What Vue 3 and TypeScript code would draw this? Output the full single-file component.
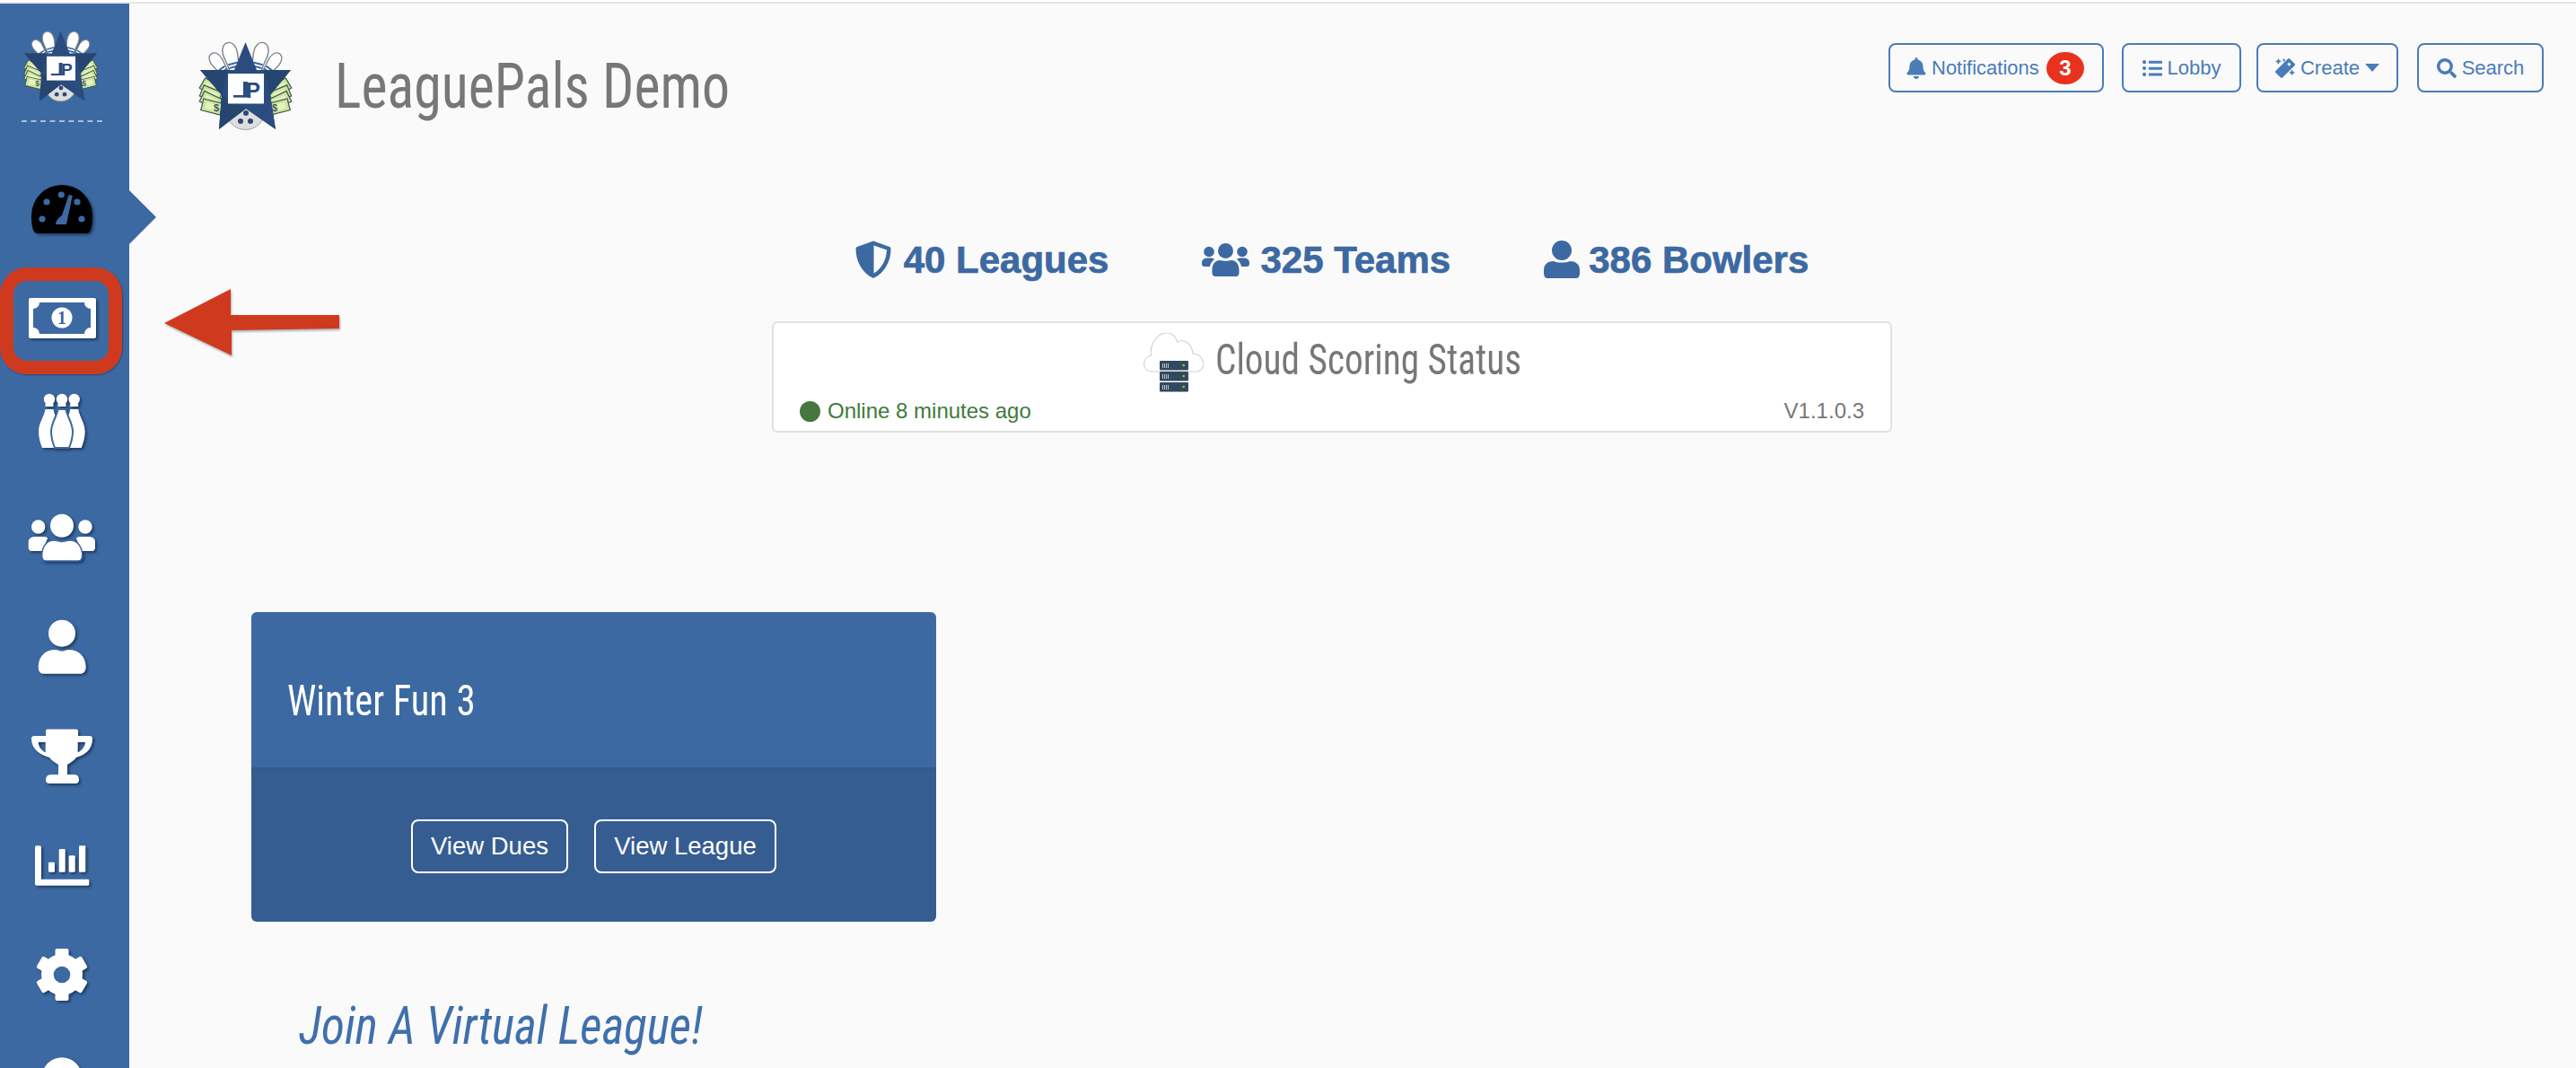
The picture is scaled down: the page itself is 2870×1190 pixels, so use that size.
<script setup lang="ts">
const gearTeeth: number[] = [0, 60, 120, 180, 240, 300]
const pinPath = 'M0,-18 C6,-18 8.5,-11 8,-5 C7.5,1 5.5,6 5.5,17 H-5.5 C-5.5,6 -7.5,1 -8,-5 C-8.5,-11 -6,-18 0,-18 Z'
const bgPin = (c: number): string =>
  `M${c - 4.5},19 H${c + 4.5} C${c + 6},28 ${c + 12},34 ${c + 12},44 C${c + 12},51 ${c + 10},57 ${c + 8},62 H${c - 8} C${c - 10},57 ${c - 12},51 ${c - 12},44 C${c - 12},34 ${c - 6},28 ${c - 4.5},19 Z`
const pins: number[] = [26, 53.7, 40]
const bills: { x: number; y: number; r: number }[] = [
  { x: 21, y: 62, r: 30 },
  { x: 21, y: 69, r: 22 },
  { x: 21, y: 76, r: 26 },
  { x: 22, y: 83, r: 14 },
]
</script>

<template>
  <div class="page">
    <svg class="defs" aria-hidden="true">
      <symbol id="lp-logo" viewBox="0 0 120 120">
        <g v-for="side in [0, 1]" :key="side" :transform="side ? 'translate(119,0) scale(-1,1)' : ''">
          <g transform="translate(30,36) rotate(-35) scale(.82)">
            <path :d="pinPath" fill="#fff" stroke="#7d838a" stroke-width="1.6" />
            <rect x="-5.4" y="5" width="10.8" height="2.4" fill="#3c69a2" />
            <rect x="-5.4" y="9.5" width="10.8" height="2.4" fill="#3c69a2" />
          </g>
          <g transform="translate(44,29)  rotate(-15)">
            <path :d="pinPath" fill="#fff" stroke="#7d838a" stroke-width="1.4" />
            <rect x="-5.4" y="5" width="10.8" height="2.1" fill="#3c69a2" />
            <rect x="-5.4" y="9" width="10.8" height="2.1" fill="#3c69a2" />
          </g>
          <g
            v-for="b in bills"
            :key="b.y"
            :transform="`translate(${b.x},${b.y}) rotate(${b.r})`"
          >
            <rect x="-11" y="-6.5" width="22" height="13" fill="#cfe59c" stroke="#3b5a52" stroke-width="1.2" />
            <rect x="-7" y="-3.5" width="14" height="7" fill="#e6f3bf" />
          </g>
        </g>
        <text class="logo-dollar" x="27" y="88">$</text>
        <text class="logo-dollar" x="92" y="88">$</text>
        <circle cx="59.5" cy="87" r="21.5" fill="#dededc" stroke="#9aa3ad" stroke-width="1" />
        <circle cx="60" cy="90" r="3" fill="#2a4a78" />
        <circle cx="54" cy="99" r="3" fill="#2a4a78" />
        <circle cx="65" cy="99" r="3" fill="#2a4a78" />
        <polygon points="59.5,11 72,42 110,42 87,70 93,108 60,85 30,108 33,70 9,42 47,42" fill="#2b4c7e" />
        <polygon points="9,42 40,42 33,70" fill="#264570" />
        <polygon points="110,42 80,42 87,70" fill="#264570" />
        <polygon points="33,70 60,85 30,108" fill="#264570" />
        <polygon points="87,70 60,85 93,108" fill="#2b4c7e" />
        <rect x="40" y="46" width="40" height="33.5" fill="#fff" />
        <rect x="46" y="70" width="12" height="2.6" fill="#2b4c7e" />
        <rect x="57" y="55" width="5" height="17.6" fill="#2b4c7e" />
        <text class="logo-p" x="60" y="72.6">P</text>
      </symbol>
    </svg>

    <aside class="sidebar">
      <div class="brand">
        <svg class="brand-logo"><use href="#lp-logo" /></svg>
      </div>
      <div class="rule"></div>
      <nav class="nav">
        <div class="item active">
          <svg class="icon" viewBox="0 0 80 80">
            <path d="M6,47 A34,34 0 0 1 74,47 C74,56 73,62 71,65 Q70,67 67,67 H13 Q10,67 9,65 C7,62 6,56 6,47 Z" fill="#000" />
            <g fill="#3c69a2">
              <circle cx="23" cy="32" r="3.6" />
              <circle cx="39.3" cy="24" r="3.6" />
              <circle cx="57" cy="32" r="3.6" />
              <circle cx="18" cy="51" r="3.6" />
              <circle cx="62" cy="51" r="3.6" />
              <path d="M47.7,24 L51.7,25 L45,57 H33 C33.5,52 37,49 40,47 Z" />
            </g>
          </svg>
        </div>
        <div class="item">
          <svg class="icon" viewBox="0 0 80 80">
            <rect x="3" y="17" width="75" height="45" rx="2" fill="#fff" />
            <path d="M15,22 H65 A7,7 0 0 0 72,29 V50 A7,7 0 0 0 65,57 H15 A7,7 0 0 0 8,50 V29 A7,7 0 0 0 15,22 Z" fill="#3c69a2" />
            <circle cx="40" cy="39" r="11.5" fill="#fff" />
            <text class="bill-one" x="40" y="46">1</text>
          </svg>
        </div>
        <div class="item">
          <svg class="icon" viewBox="0 0 80 80">
            <g v-for="c in pins" :key="c">
              <circle :cx="c" cy="8" r="6.2" fill="#fff" />
              <rect :x="c - 4.5" y="13" width="9" height="3" fill="#fff" />
              <path :d="bgPin(c)" fill="#fff" :stroke="c === 40 ? '#3c69a2' : 'none'" :stroke-width="c === 40 ? 2 : 0" />
            </g>
          </svg>
        </div>
        <div class="item">
          <svg class="icon" viewBox="0 0 80 80">
            <circle cx="13.7" cy="28" r="7.7" fill="#fff" />
            <circle cx="66" cy="28" r="7.7" fill="#fff" />
            <path d="M2.7,45 C2.7,41 6,39 10,39 H20 C23,39 24,40 24,41 L18,55 H6 C4,55 2.7,53 2.7,51 Z" fill="#fff" />
            <path d="M77,45 C77,41 74,39 70,39 H60 C57,39 56,40 56,41 L62,55 H74 C76,55 77,53 77,51 Z" fill="#fff" />
            <circle cx="40" cy="26.7" r="13" fill="#fff" />
            <path d="M17.7,60 C17.7,50 23,43 31,43 C35,43 37,44.5 40,44.5 C43,44.5 45,43 49,43 C57,43 62.7,50 62.7,60 C62.7,64 60.5,66 58,66 H22 C19.5,66 17.7,64 17.7,60 Z" fill="#fff" stroke="#3c69a2" stroke-width="1.5" />
          </svg>
        </div>
        <div class="item">
          <svg class="icon" viewBox="0 0 80 80">
            <circle cx="40" cy="24.7" r="15" fill="#fff" />
            <path d="M13.7,62 C13.7,50 22,43 32,43 C36,43 37,44.5 40,44.5 C43,44.5 44,43 48,43 C58,43 66.7,50 66.7,62 C66.7,67 64,69.7 61,69.7 H19 C16,69.7 13.7,67 13.7,62 Z" fill="#fff" />
          </svg>
        </div>
        <div class="item">
          <svg class="icon" viewBox="0 0 80 80">
            <path
              fill="#fff"
              fill-rule="evenodd"
              d="M24,9.5 H56 Q58,9.5 58,11.5 V17 H71 Q74,17 74,20 C74,32 66,38 56,41 C53,45 49,47 46,49 V60 H54 Q59,60 59,66 Q59,70 55,70 H26 Q22,70 22,66 Q22,60 28,60 H36 V49 C33,47 29,45 26,41 C16,38 6,32 6,20 Q6,17 9,17 H22 V11.5 Q22,9.5 24,9.5 Z M13.7,24 H21.7 V35.5 C17,33 14,29 13.7,24 Z M57.7,24 H66 C65.7,29 62.5,33 57.7,35.5 Z"
            />
          </svg>
        </div>
        <div class="item">
          <svg class="icon" viewBox="0 0 80 80">
            <g fill="#fff">
              <path d="M10,19 Q10,17.3 11.7,17.3 H15 Q17,17.3 17,19 V54.7 H69 Q70.3,54.7 70.3,56 V60 Q70.3,61.7 69,61.7 H12 Q10,61.7 10,60 Z" />
              <rect x="25" y="35.7" width="7" height="11" rx="1" />
              <rect x="36.7" y="21" width="7" height="25.7" rx="1" />
              <rect x="47.7" y="28.3" width="7" height="18.4" rx="1" />
              <rect x="59" y="17.3" width="7.3" height="29.4" rx="1" />
            </g>
          </svg>
        </div>
        <div class="item">
          <svg class="icon" viewBox="0 0 80 80">
            <g fill="#fff">
              <circle cx="40" cy="39" r="23" />
              <rect
                v-for="a in gearTeeth"
                :key="a"
                x="32.5"
                y="10"
                width="15"
                height="14"
                rx="2"
                :transform="`rotate(${a} 40 39)`"
              />
            </g>
            <circle cx="40" cy="39" r="9.3" fill="#3c69a2" />
          </svg>
        </div>
        <div class="item">
          <svg class="icon" viewBox="0 0 80 80">
            <circle cx="40" cy="32" r="22.7" fill="#fff" />
          </svg>
        </div>
      </nav>
      <div class="active-notch"></div>
    </aside>

    <main class="main">
      <header class="topbar">
        <svg class="head-logo"><use href="#lp-logo" /></svg>
        <h1 class="site-title"><span>LeaguePals Demo</span></h1>
        <div class="actions">
          <a class="btn btn-notify">
            <svg class="btn-icon" viewBox="0 0 448 512"><path d="M224 512c35 0 64-29 64-64H160c0 35 29 64 64 64zm215-150c-19-21-55-52-55-154 0-78-55-140-128-155V32a32 32 0 1 0-64 0v21C119 68 64 130 64 208c0 102-36 133-55 154-6 6-9 14-9 22 0 16 13 32 32 32h384c19 0 32-16 32-32 0-8-3-16-9-22z" /></svg>
            <span>Notifications</span>
            <b class="badge">3</b>
          </a>
          <a class="btn btn-lobby">
            <svg class="btn-icon" viewBox="0 0 512 512"><path d="M48 48a48 48 0 1 0 0 96 48 48 0 0 0 0-96zm0 160a48 48 0 1 0 0 96 48 48 0 0 0 0-96zm0 160a48 48 0 1 0 0 96 48 48 0 0 0 0-96zm448 16H176c-9 0-16 7-16 16v40c0 9 7 16 16 16h320c9 0 16-7 16-16v-40c0-9-7-16-16-16zm0-320H176c-9 0-16 7-16 16v40c0 9 7 16 16 16h320c9 0 16-7 16-16V80c0-9-7-16-16-16zm0 160H176c-9 0-16 7-16 16v40c0 9 7 16 16 16h320c9 0 16-7 16-16v-40c0-9-7-16-16-16z" /></svg>
            <span>Lobby</span>
          </a>
          <a class="btn btn-create">
            <svg class="btn-icon" viewBox="0 0 512 512"><path d="M224 96l16-32 32-16-32-16-16-32-16 32-32 16 32 16 16 32zM80 160l27-53 53-27-53-27L80 0 53 53 0 80l53 27 27 53zm352 128l-27 53-53 27 53 27 27 53 27-53 53-27-53-27-27-53zm71-148L372 9a32 32 0 0 0-45 0L9 327a32 32 0 0 0 0 45l131 131a32 32 0 0 0 45 0l318-318a32 32 0 0 0 0-45zM359 203l-50-50 46-46 50 50-46 46z" /></svg>
            <span>Create</span>
            <i class="caret"></i>
          </a>
          <a class="btn btn-search">
            <svg class="btn-icon" viewBox="0 0 512 512"><path d="M505 443L405 343c-4-4-10-7-17-7h-16a208 208 0 1 0-36 36v16c0 7 3 13 7 17l100 100c9 9 25 9 34 0l28-28c9-10 9-25 0-34zM208 336a128 128 0 1 1 0-256 128 128 0 0 1 0 256z" /></svg>
            <span>Search</span>
          </a>
        </div>
      </header>

      <section class="status-col">
        <div class="stats">
          <div class="stat stat-leagues">
            <svg class="stat-shield" viewBox="0 0 40 42">
              <path d="M20,0.5 L38,7 Q39.5,7.6 39.5,9 C39.5,24 32,36 21,41.5 Q20,42 19,41.5 C8,36 0.5,24 0.5,9 Q0.5,7.6 2,7 Z" fill="#3c69a2" />
              <path d="M20.5,5.5 L35,10.5 C34.5,22 29,31.5 20.5,36.5 Z" fill="#fafafa" />
            </svg>
            <span>40 Leagues</span>
          </div>
          <div class="stat stat-teams">
            <svg class="stat-users" viewBox="0 0 53 37">
              <circle cx="8" cy="9.5" r="5.8" />
              <circle cx="45" cy="9.5" r="5.8" />
              <circle cx="26.5" cy="8.5" r="8.5" />
              <path d="M0,22 C0,18 3,16.5 6,16.5 H10 C12,16.5 13,17 14,18 C11,20 9.5,23 9,26 H3 C1,26 0,25 0,23 Z" />
              <path d="M53,22 C53,18 50,16.5 47,16.5 H43 C41,16.5 40,17 39,18 C42,20 43.5,23 44,26 H50 C52,26 53,25 53,23 Z" />
              <path d="M11.5,30 C11.5,23 15,19 20,19 C23,20 30,20 33,19 C38,19 41.5,23 41.5,30 V33 C41.5,35.5 40,37 38,37 H15 C13,37 11.5,35.5 11.5,33 Z" />
            </svg>
            <span>325 Teams</span>
          </div>
          <div class="stat stat-bowlers">
            <svg class="stat-user" viewBox="0 0 40 42">
              <circle cx="20" cy="11" r="11" />
              <path d="M0,37 V33 C0,26 5,23 11,23 C15,25 25,25 29,23 C35,23 40,26 40,33 V37 C40,40 38,42 36,42 H4 C2,42 0,40 0,37 Z" />
            </svg>
            <span>386 Bowlers</span>
          </div>
        </div>

        <div class="cloud-card">
          <div class="cloud-head">
            <svg class="cloud-icon" viewBox="14 11 67 67">
              <path d="M22,54 C12,52 12,38 23,36 C20,24 30,11 40,11 C47,11 50,16 52,21 C58,17 68,22 69,34 C82,34 85,52 74,54 Z" fill="#fff" stroke="#d2d2d2" stroke-width="1.2" />
              <g fill="#34495e">
                <rect x="32" y="42" width="32" height="10.5" rx="1" />
                <rect x="32" y="54" width="32" height="10.5" rx="1" />
                <rect x="32" y="66" width="32" height="10.5" rx="1" />
              </g>
              <g fill="#b7c2cc">
                <rect x="35" y="45" width="1" height="5" /><rect x="37" y="45" width="1" height="5" /><rect x="39" y="45" width="1" height="5" /><rect x="41" y="45" width="1" height="5" />
                <rect x="35" y="57" width="1" height="5" /><rect x="37" y="57" width="1" height="5" /><rect x="39" y="57" width="1" height="5" /><rect x="41" y="57" width="1" height="5" />
                <rect x="35" y="69" width="1" height="5" /><rect x="37" y="69" width="1" height="5" /><rect x="39" y="69" width="1" height="5" /><rect x="41" y="69" width="1" height="5" />
              </g>
              <g fill="#5fe04a">
                <circle cx="58.7" cy="47" r="1.3" /><circle cx="58.7" cy="59" r="1.3" /><circle cx="58.7" cy="71" r="1.3" />
              </g>
            </svg>
            <h2 class="cloud-title"><span>Cloud Scoring Status</span></h2>
          </div>
          <div class="cloud-foot">
            <span class="online"><i class="dot"></i>Online 8 minutes ago</span>
            <span class="version">V1.1.0.3</span>
          </div>
        </div>
      </section>

      <section class="league-card">
        <div class="league-head"><h3 class="league-name"><span>Winter Fun 3</span></h3></div>
        <div class="league-foot">
          <a class="ghost ghost-dues">View Dues</a>
          <a class="ghost ghost-league">View League</a>
        </div>
      </section>

      <h2 class="join"><span>Join A Virtual League!</span></h2>
    </main>

    <div class="callout-box"></div>
    <svg class="callout-arrow" viewBox="0 0 200 76">
      <polygon points="0,38 74,0 74,29 195,29 195,44 75,46 75,74" fill="#cf3a1f" />
    </svg>
  </div>
</template>

<style>
html,
body {
  margin: 0;
  background: #fafafa;
}
</style>

<style scoped>
.page {
  position: relative;
  display: flex;
  width: 2870px;
  height: 1190px;
  box-sizing: border-box;
  overflow: hidden;
  background: #fafafa;
  font-family: "Liberation Sans", Arial, sans-serif;
  border-top: 2px solid #fff;
}
.page::before {
  content: "";
  position: absolute;
  left: 0;
  right: 0;
  top: 0;
  height: 2px;
  background: #e5e5e5;
}
.defs {
  position: absolute;
  width: 0;
  height: 0;
}
.sidebar {
  position: relative;
  flex: none;
  width: 144px;
  margin-top: 2px;
  background: #3c69a2;
}
.brand {
  height: 118px;
  padding: 22px 0 0 20px;
  box-sizing: border-box;
}
.brand-logo {
  display: block;
  width: 96px;
  height: 96px;
}
.rule {
  width: 90px;
  margin: 12px 0 0 24px;
  border-top: 2px dashed #a9bdd6;
}
.nav {
  width: 138px;
  margin-top: 36px;
}
.item {
  display: flex;
  align-items: center;
  justify-content: center;
  height: 122px;
}
.icon {
  width: 80px;
  height: 80px;
  overflow: visible;
  filter: drop-shadow(2px 2px 1.5px rgba(18, 38, 70, 0.7));
}
.bill-one {
  font-family: "Liberation Serif", serif;
  font-weight: 700;
  font-size: 20px;
  text-anchor: middle;
  fill: #3c69a2;
}
.logo-dollar {
  font-family: "Liberation Sans", sans-serif;
  font-weight: 700;
  font-size: 11px;
  text-anchor: middle;
  fill: #3f5b58;
}
.logo-p {
  font-family: "Liberation Sans", sans-serif;
  font-weight: 700;
  font-size: 24px;
  fill: #2b4c7e;
}
.active-notch {
  position: absolute;
  left: 144px;
  top: 208px;
  width: 0;
  height: 0;
  border-top: 30px solid transparent;
  border-bottom: 30px solid transparent;
  border-left: 30px solid #3c69a2;
}
.main {
  flex: 1;
  min-width: 0;
  padding-top: 2px;
}
.topbar {
  display: flex;
  align-items: flex-start;
  height: 152px;
  box-sizing: border-box;
  padding: 32px 36px 0 70px;
}
.head-logo {
  flex: none;
  width: 120px;
  height: 120px;
}
.site-title {
  width: 450px;
  margin: 19px 0 0 39px;
  font-family: "Roboto Condensed", sans-serif;
  font-weight: 400;
  font-size: 70px;
  line-height: 82px;
  color: #777;
  white-space: nowrap;
}
.site-title span,
.cloud-title span,
.league-name span,
.join span {
  display: inline-block;
  transform-origin: left center;
}
.site-title span {
  transform: scaleX(0.885);
}
.actions {
  display: flex;
  margin: 12px 0 0 auto;
}
.btn {
  display: flex;
  align-items: center;
  justify-content: center;
  gap: 6px;
  height: 55px;
  box-sizing: border-box;
  border: 2px solid #4a7cb8;
  border-radius: 8px;
  font-size: 22px;
  color: #4a7cb8;
}
.btn-notify {
  justify-content: flex-start;
  width: 240px;
  margin-right: 20px;
  padding-left: 18px;
}
.btn-lobby {
  width: 133px;
  margin-right: 17px;
}
.btn-create {
  width: 158px;
  margin-right: 21px;
}
.btn-search {
  width: 141px;
}
.btn-icon {
  flex: none;
  width: 22px;
  height: 24px;
  fill: #4a7cb8;
}
.badge {
  flex: none;
  display: flex;
  align-items: center;
  justify-content: center;
  width: 42px;
  height: 36px;
  margin-left: 2px;
  border-radius: 50%;
  background: #e8321f;
  color: #fff;
  font-size: 24px;
}
.caret {
  width: 0;
  height: 0;
  border-left: 8px solid transparent;
  border-right: 8px solid transparent;
  border-top: 9px solid #4a7cb8;
}
.status-col {
  width: 1248px;
  margin-left: 716px;
}
.stats {
  display: flex;
  justify-content: center;
  gap: 104px;
  margin-top: 112px;
  height: 90px;
}
.stat {
  display: flex;
  align-items: flex-start;
  height: 42px;
  font-weight: 700;
  font-size: 42px;
  line-height: 42px;
  color: #3c69a2;
  white-space: nowrap;
  -webkit-text-stroke: 0.7px #3c69a2;
}
.stat span {
  margin-top: 1px;
}
.stat svg {
  flex: none;
  fill: #3c69a2;
}
.stat-shield {
  width: 40px;
  height: 42px;
  margin-right: 14px;
}
.stat-users {
  width: 53px;
  height: 37px;
  margin: 3px 12px 0 0;
}
.stat-user {
  width: 40px;
  height: 42px;
  margin-right: 10px;
}
.cloud-card {
  height: 124px;
  box-sizing: border-box;
  padding: 11px 29px 0;
  background: #fff;
  border: 2px solid #e0e0e0;
  border-radius: 6px;
}
.cloud-head {
  display: flex;
  justify-content: center;
  gap: 13px;
  height: 67px;
}
.cloud-icon {
  flex: none;
  width: 67px;
  height: 67px;
}
.cloud-title {
  width: 341px;
  margin: 2px 0 0;
  font-family: "Roboto Condensed", sans-serif;
  font-weight: 400;
  font-size: 48px;
  line-height: 56px;
  color: #777;
  white-space: nowrap;
}
.cloud-title span {
  transform: scaleX(0.86);
}
.cloud-foot {
  display: flex;
  justify-content: space-between;
  align-items: center;
  margin-top: 6px;
  height: 28px;
  font-size: 24px;
}
.online {
  display: flex;
  align-items: center;
  gap: 8px;
  color: #3f7a3a;
}
.dot {
  width: 23px;
  height: 23px;
  border-radius: 50%;
  background: #47763f;
}
.version {
  color: #777;
}
.league-card {
  width: 763px;
  margin: 200px 0 0 136px;
  border-radius: 6px;
  overflow: hidden;
  color: #fff;
}
.league-head {
  display: flex;
  align-items: center;
  height: 173px;
  padding-left: 40px;
  background: #3c69a2;
}
.league-name {
  margin: 24px 0 0;
  font-family: "Roboto Condensed", sans-serif;
  font-weight: 400;
  font-size: 48px;
  line-height: 56px;
  white-space: nowrap;
}
.league-name span {
  transform: scaleX(0.885);
}
.league-foot {
  display: flex;
  align-items: center;
  justify-content: center;
  gap: 29px;
  height: 168px;
  border-top: 4px solid #355a8c;
  background: #365d91;
}
.ghost {
  display: flex;
  align-items: center;
  justify-content: center;
  height: 60px;
  box-sizing: border-box;
  border: 2px solid #fff;
  border-radius: 8px;
  font-size: 27.5px;
  color: #fff;
}
.ghost-dues {
  width: 175px;
}
.ghost-league {
  width: 203px;
}
.join {
  margin: 81px 0 0 189px;
  font-family: "Roboto Condensed", sans-serif;
  font-style: italic;
  font-weight: 400;
  font-size: 59px;
  line-height: 70px;
  color: #3f70ac;
  white-space: nowrap;
}
.join span {
  transform: scaleX(0.903);
}
.callout-box {
  position: absolute;
  left: 0;
  top: 296px;
  width: 136px;
  height: 119px;
  box-sizing: border-box;
  border: 15px solid #cf3a1f;
  border-radius: 30px;
  box-shadow: 1px 1px 2px rgba(0, 0, 0, 0.3);
}
.callout-arrow {
  position: absolute;
  left: 183px;
  top: 320px;
  width: 200px;
  height: 76px;
  filter: drop-shadow(1px 2px 1px rgba(0, 0, 0, 0.3));
}
</style>
